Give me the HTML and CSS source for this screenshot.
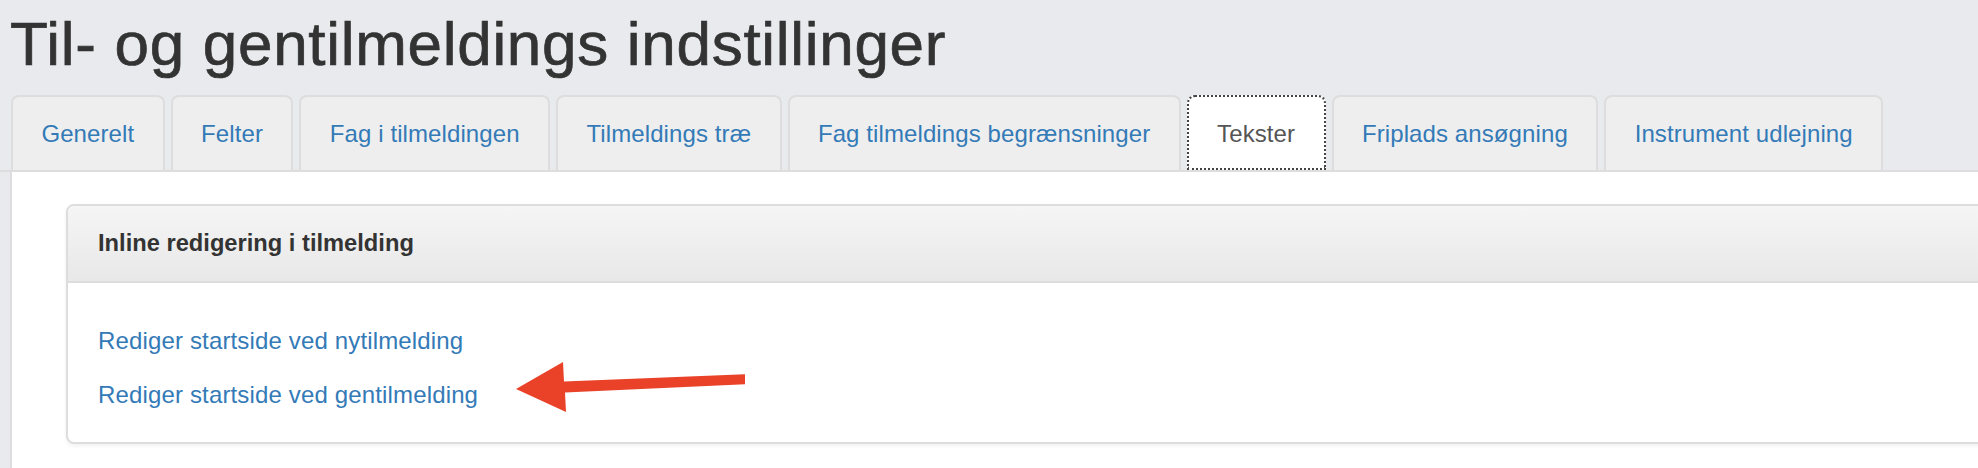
FILE: index.html
```html
<!DOCTYPE html>
<html lang="da">
<head>
<meta charset="utf-8">
<title>Til- og gentilmeldings indstillinger</title>
<link rel="stylesheet" href="styles.css">
</head>
<body>
<div class="page">
  <h1 class="page-title">Til- og gentilmeldings indstillinger</h1>
  <ul class="tabs">
    <li class="tab"><a href="#">Generelt</a></li>
    <li class="tab"><a href="#">Felter</a></li>
    <li class="tab"><a href="#">Fag i tilmeldingen</a></li>
    <li class="tab"><a href="#">Tilmeldings træ</a></li>
    <li class="tab"><a href="#">Fag tilmeldings begrænsninger</a></li>
    <li class="tab active"><a href="#">Tekster</a></li>
    <li class="tab"><a href="#">Friplads ansøgning</a></li>
    <li class="tab"><a href="#">Instrument udlejning</a></li>
  </ul>
  <div class="tab-content">
    <div class="panel">
      <div class="panel-heading">Inline redigering i tilmelding</div>
      <div class="panel-body">
        <a class="edit-link" href="#">Rediger startside ved nytilmelding</a>
        <a class="edit-link" href="#">Rediger startside ved gentilmelding</a>
      </div>
    </div>
  </div>
  <svg class="annotation" width="1978" height="468" viewBox="0 0 1978 468" aria-hidden="true">
    <polygon points="516,389 563,362 564,381.5 745,374.3 745,384.3 565,392.5 566,412" fill="#e94229"/>
  </svg>
</div>
</body>
</html>
```

FILE: styles.css
```css
html, body {
  margin: 0;
  padding: 0;
}

body {
  background: #e9eaee;
  font-family: "Liberation Sans", Arial, Helvetica, sans-serif;
  color: #333;
  overflow: hidden;
}

.page {
  position: relative;
  height: 468px;
  overflow: hidden;
}

.page-title {
  margin: 0;
  padding: 11px 0 0 10px;
  font-size: 62px;
  line-height: 66px;
  font-weight: 400;
  letter-spacing: 0.7px;
  color: #333;
  -webkit-text-stroke: 0.7px #333;
}

.tabs {
  list-style: none;
  margin: 18px 0 0 0;
  padding: 0 0 0 11px;
  display: flex;
  gap: 6px;
  border-bottom: 2px solid #dddddd;
}

.tab a {
  display: block;
  height: 73px;
  line-height: 73px;
  padding: 0 28.4px;
  background: #eeeeee;
  border: 2px solid #dddddd;
  border-bottom: 0;
  border-radius: 8px 8px 0 0;
  color: #337ab7;
  font-size: 24px;
  letter-spacing: 0.1px;
  text-decoration: none;
}

.tab.active a {
  background: #ffffff;
  color: #555555;
  border-color: #ffffff;
  outline: 2px dotted #444;
  outline-offset: -2px;
}

.tab-content {
  margin-left: 10px;
  border-left: 2px solid #dddddd;
  background: #ffffff;
  padding: 32px 0 24px 54px;
}

.panel {
  margin-right: -60px;
  background: #ffffff;
  border: 2px solid #dddddd;
  border-radius: 8px;
  box-shadow: 0 2px 4px rgba(0, 0, 0, 0.06);
}

.panel-heading {
  padding: 20px 30px;
  line-height: 35px;
  font-size: 23.7px;
  font-weight: 700;
  color: #333;
  background: linear-gradient(to bottom, #f5f5f5 0%, #e8e8e8 100%);
  border-bottom: 2px solid #dddddd;
  border-radius: 6px 6px 0 0;
}

.panel-body {
  display: flex;
  flex-direction: column;
  align-items: flex-start;
  gap: 20px;
  padding: 41px 30px 30px;
}

.edit-link {
  font-size: 24px;
  line-height: 34px;
  letter-spacing: 0.15px;
  color: #337ab7;
  text-decoration: none;
}

.annotation {
  position: absolute;
  left: 0;
  top: 0;
  pointer-events: none;
}
```
